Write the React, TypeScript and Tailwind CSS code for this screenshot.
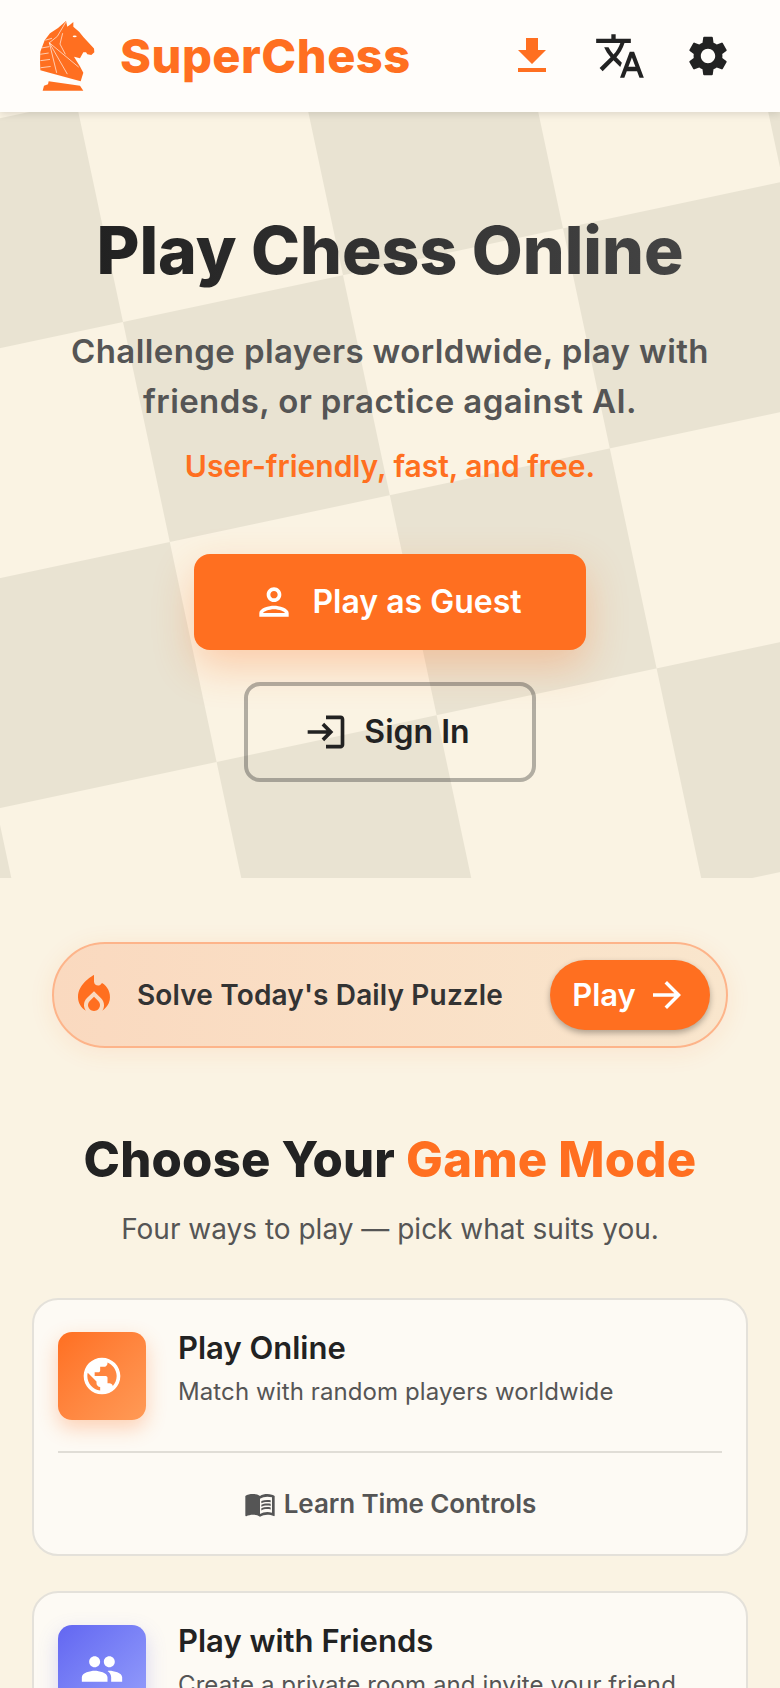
import { MdFileDownload, MdTranslate, MdSettings, MdOutlinePerson, MdLogin, MdLocalFireDepartment, MdArrowForward, MdPublic, MdMenuBook, MdPeople } from 'react-icons/md';

function Knight() {
  return (
    <svg viewBox="0 0 210 246" className="w-[70px] h-[82px] shrink-0" aria-hidden="true">
      <g transform="translate(0,-5) scale(1,0.96)">
        <path
          fill="#ff6f20"
          d="M108 24 L112 42 L122 34 L130 27 L130 42 L148 58 L160 74 L176 92 L192 110 L193 122 L184 130 L172 128 L168 122 L160 122 L150 140 L132 136 L150 166 L160 186 L152 212 L58 186 L31 178 L30 150 L31 120 L44 84 L60 62 L84 46 Z"
        />
        <path fill="#ff6f20" d="M56 212 L150 226 L160 242 L38 242 L42 226 L54 222 Z" />
        <g fill="none" stroke="#fffdfa" strokeWidth="2">
          <path d="M107 28 L82 72 L58 92 L80 186" />
          <path d="M58 92 L112 190" />
          <path d="M58 92 L146 168" />
          <path d="M46 84 L66 78 M36 108 L58 104 M31 128 L56 124 M31 148 L60 144 M32 170 L62 166" />
          <path d="M98 62 L90 96 L106 128" />
        </g>
        <ellipse cx="134" cy="72" rx="6" ry="3" fill="#fffdfa" />
      </g>
    </svg>
  );
}

function CheckerBoard() {
  return (
    <svg className="absolute inset-0 w-full h-full" aria-hidden="true">
      <defs>
        <pattern id="board" width="2" height="2" patternUnits="userSpaceOnUse" patternTransform="matrix(220 -46.8 46.8 220 123 210)">
          <rect width="2" height="2" fill="#faf3e3" />
          <rect width="1" height="1" fill="#e9e3d2" />
          <rect x="1" y="1" width="1" height="1" fill="#e9e3d2" />
        </pattern>
      </defs>
      <rect width="100%" height="100%" fill="url(#board)" />
    </svg>
  );
}

function ModeCard({ icon, tile, title, desc, footer }: { icon: React.ReactNode; tile: string; title: string; desc: string; footer?: boolean }) {
  return (
    <div className="rounded-[26px] border-2 border-[#e4e1da] bg-[#fdfaf4] px-[24px] pt-[32px]">
      <div className="flex gap-[32px]">
        <div className={`flex h-[88px] w-[88px] shrink-0 items-center justify-center rounded-[14px] text-white ${tile}`}>
          {icon}
        </div>
        <div className="min-w-0">
          <div className="mt-[-2px] text-[31px] font-semibold leading-[36px] text-[#222222]">{title}</div>
          <div className="mt-[8px] whitespace-nowrap text-[24px] leading-[36px] tracking-[0.1px] text-[#555555]">{desc}</div>
        </div>
      </div>
      {footer && (
        <div className="mt-[31px] flex h-[103px] items-center justify-center gap-[8px] border-t-2 border-[#e0ddd6] text-[26px] font-semibold tracking-[-0.1px] text-[#555555]">
          <MdMenuBook size={32} />
          <span>Learn Time Controls</span>
        </div>
      )}
    </div>
  );
}

export default function App() {
  return (
    <div className="h-[1688px] w-[780px] overflow-hidden bg-[#faf3e3] font-['Inter',sans-serif]">
      <header className="relative z-10 flex h-[112px] items-center justify-between bg-[#fffdfa] pl-[30px] pr-[48px] shadow-[0_2px_8px_rgba(0,0,0,0.12)]">
        <div className="flex items-center gap-[20px]">
          <Knight />
          <span className="text-[47px] font-extrabold tracking-[0.5px] text-[#ff6f20]">SuperChess</span>
        </div>
        <div className="flex items-center gap-[38px]">
          <MdFileDownload size={48} className="text-[#ff6f20]" />
          <MdTranslate size={52} className="text-[#222222]" />
          <MdSettings size={48} className="text-[#222222]" />
        </div>
      </header>

      <section className="relative flex h-[766px] flex-col items-center overflow-hidden pt-[100px]">
        <CheckerBoard />
        <h1 className="relative bg-gradient-to-r from-[#222222] to-[#444444] bg-clip-text text-[66px] font-extrabold leading-[76px] text-transparent">
          Play Chess Online
        </h1>
        <p className="relative mt-[38px] w-[700px] text-center text-[33px] font-semibold leading-[50px] tracking-[0.4px] text-[#555555]">
          Challenge players worldwide, play with friends, or practice against AI.
        </p>
        <p className="relative mt-[20px] text-[30px] font-semibold leading-[40px] text-[#ff6f20]">User-friendly, fast, and free.</p>
        <button className="relative mt-[68px] flex h-[96px] w-[392px] items-center justify-center gap-[16px] rounded-[16px] bg-[#ff6f20] pr-[6px] text-[32px] font-semibold text-white shadow-[0_16px_40px_rgba(255,111,32,0.3)]">
          <MdOutlinePerson size={44} />
          Play as Guest
        </button>
        <button className="relative mt-[32px] flex h-[100px] w-[292px] items-center justify-center gap-[16px] rounded-[16px] border-4 border-[#22222255] pr-[6px] text-[32px] font-semibold text-[#222222]">
          <MdLogin size={44} />
          Sign In
        </button>
      </section>

      <div className="mx-[52px] mt-[64px] flex h-[106px] items-center justify-between rounded-full border-2 border-[#fdb48a] bg-gradient-to-r from-[#fad9bf] to-[#f9e6cd] pl-[16px] pr-[16px] shadow-[0_4px_24px_rgba(255,111,32,0.1)]">
        <div className="flex items-center gap-[19px]">
          <MdLocalFireDepartment size={48} className="text-[#ff6f20]" />
          <span className="text-[28px] font-semibold tracking-[0.15px] text-[#333333]">Solve Today's Daily Puzzle</span>
        </div>
        <div className="flex h-[70px] w-[160px] items-center justify-center gap-[10px] rounded-full bg-[#ff6f20] text-[31px] font-semibold text-white shadow-[0_3px_6px_rgba(0,0,0,0.3)]">
          Play
          <MdArrowForward size={42} />
        </div>
      </div>

      <h2 className="mt-[82px] text-center text-[49px] font-extrabold leading-[60px] tracking-[0.2px] text-[#222222]">
        Choose Your <span className="text-[#ff6f20]">Game Mode</span>
      </h2>
      <p className="mt-[19px] text-center text-[28px] leading-[40px] text-[#555555]">Four ways to play — pick what suits you.</p>

      <div className="mx-[32px] mt-[49px] flex flex-col gap-[35px]">
        <ModeCard
          icon={<MdPublic size={44} />}
          tile="bg-gradient-to-br from-[#ff6f20] to-[#ff9a56] shadow-[0_8px_20px_rgba(255,111,32,0.3)]"
          title="Play Online"
          desc="Match with random players worldwide"
          footer
        />
        <ModeCard
          icon={<MdPeople size={44} />}
          tile="bg-gradient-to-br from-[#6366f1] to-[#979ffb] shadow-[0_8px_20px_rgba(99,102,241,0.25)]"
          title="Play with Friends"
          desc="Create a private room and invite your friend"
        />
      </div>
    </div>
  );
}
